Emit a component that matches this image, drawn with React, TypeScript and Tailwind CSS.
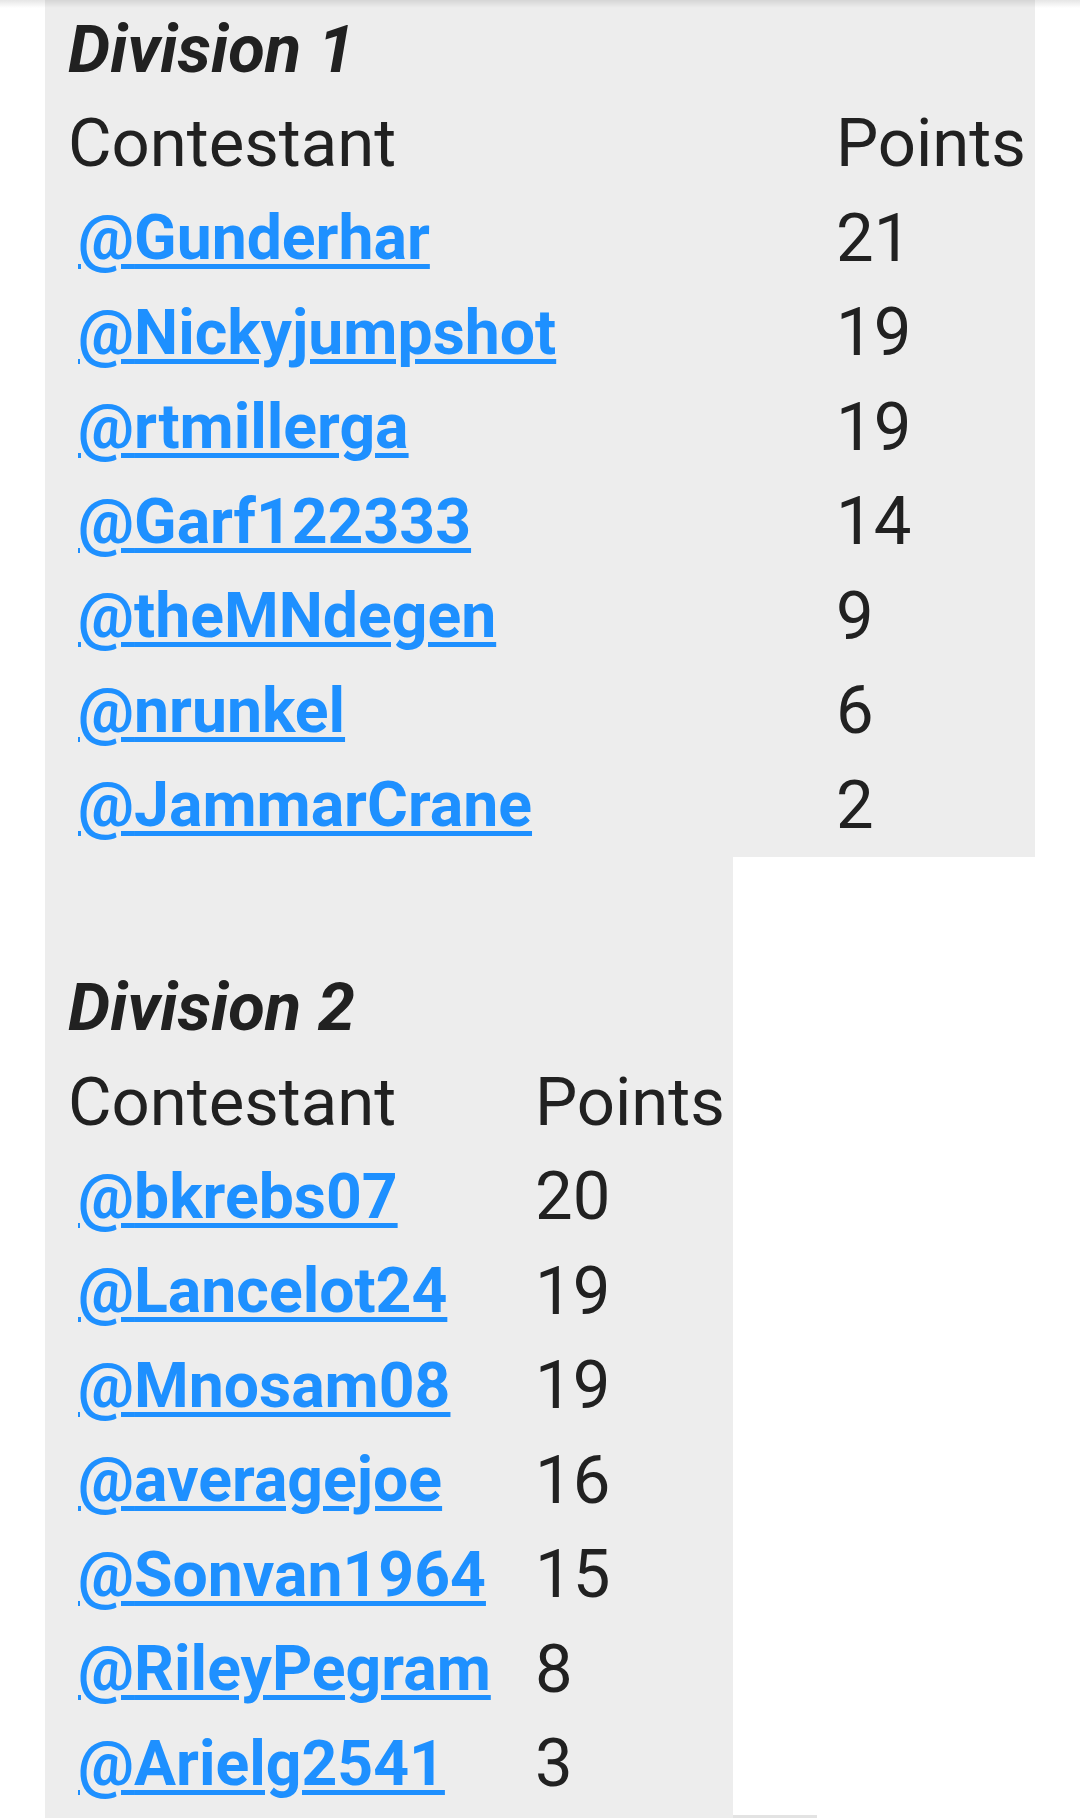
const division1 = [
  { name: 'Gunderhar', points: 21 },
  { name: 'Nickyjumpshot', points: 19 },
  { name: 'rtmillerga', points: 19 },
  { name: 'Garf122333', points: 14 },
  { name: 'theMNdegen', points: 9 },
  { name: 'nrunkel', points: 6 },
  { name: 'JammarCrane', points: 2 },
];

const division2 = [
  { name: 'bkrebs07', points: 20 },
  { name: 'Lancelot24', points: 19 },
  { name: 'Mnosam08', points: 19 },
  { name: 'averagejoe', points: 16 },
  { name: 'Sonvan1964', points: 15 },
  { name: 'RileyPegram', points: 8 },
  { name: 'Arielg2541', points: 3 },
];

type Entry = { name: string; points: number };

function Standings({ title, rows, nameCol }: { title: string; rows: Entry[]; nameCol: string }) {
  return (
    <>
      <div className="flex h-[94.5px] items-center pl-[23px] text-[67px] font-bold italic leading-none text-[#212121]">{title}</div>
      <div className="flex h-[94.5px] items-center pl-[23px] text-[67px] leading-none text-[#212121]">
        <span className={nameCol}>Contestant</span>
        <span>Points</span>
      </div>
      {rows.map((row) => (
        <div key={row.name} className="flex h-[94.5px] items-center pl-[23px] leading-none">
          <span className={nameCol}>
            <a href="#" className="ml-[10px] text-[62.5px] font-bold text-[#1e90ff] underline decoration-[4.5px] underline-offset-[5px]">@{row.name}</a>
          </span>
          <span className="text-[67px] text-[#212121]">{row.points}</span>
        </div>
      ))}
    </>
  );
}

export default function App() {
  return (
    <div className="relative h-[1818px] w-[1080px] overflow-hidden bg-white font-['Roboto',sans-serif]">
      <div className="pointer-events-none absolute inset-x-0 top-0 h-[8px] bg-gradient-to-b from-black/10 to-transparent" />
      <div className="pl-[45px]">
        <div className="w-[990px] bg-[#ededed] pb-[4px] pt-[2px]">
          <Standings title="Division 1" rows={division1} nameCol="w-[768px] shrink-0" />
        </div>
        <div className="w-[688px] bg-[#ededed] pb-[8px]">
          <div className="h-[104px]" />
          <Standings title="Division 2" rows={division2} nameCol="w-[467px] shrink-0" />
        </div>
      </div>
      <div className="absolute bottom-0 left-[733px] h-[3px] w-[84px] bg-[#e3e3e3]" />
    </div>
  );
}
